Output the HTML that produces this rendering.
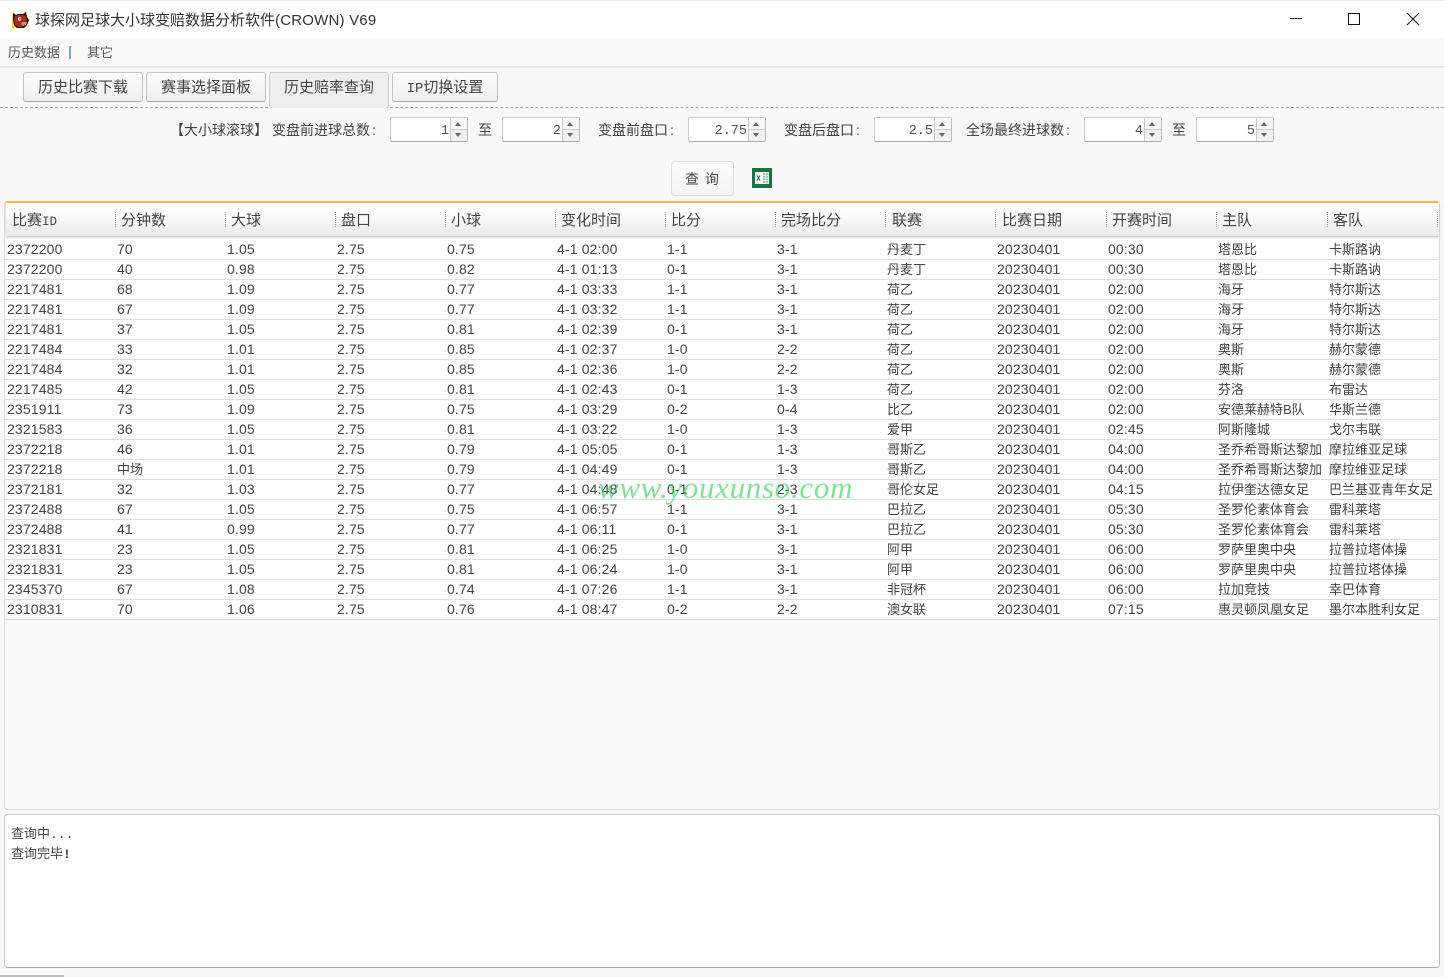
<!DOCTYPE html>
<html><head><meta charset="utf-8"><title>球探网足球大小球变赔数据分析软件</title>
<style>
*{box-sizing:border-box}
html,body{margin:0;padding:0}
body{width:1444px;height:977px;overflow:hidden;position:relative;background:#f8f8f8;font-family:"Liberation Sans","Noto Sans CJK SC",sans-serif;color:#333}
.a{position:absolute;white-space:nowrap}
.l{font-size:13px;line-height:20px;color:#444}
.f{font-size:14px}
.l em{font-style:normal;margin-left:2px}
.tab{position:absolute;top:72px;height:30px;border:1px solid #c4c4c4;border-bottom-color:#aaa;border-radius:3px;background:linear-gradient(#fcfcfc,#eee);font-size:15px;line-height:29px;text-align:center;color:#444}
.spin{position:absolute;top:117px;width:78px;height:25px;background:#fff;border:1px solid #ccc;border-bottom-color:#aaa;border-right-color:#bbb;border-radius:2px;font-family:"Liberation Mono","Noto Sans CJK SC",monospace;font-size:13.5px;line-height:25px;color:#555}
.spin b{position:absolute;right:18px;top:1px;font-weight:normal}
.spin i{position:absolute;right:0;top:0;width:17px;height:23px;border-left:1px solid #ccc;background:linear-gradient(#f8f8f8 0,#f8f8f8 11px,#ccc 11px,#ccc 12px,#f0f0f0 12px)}
.spin i:before{content:"";position:absolute;left:4px;top:4px;border:3px solid transparent;border-top:0;border-bottom:4px solid #666}
.spin i:after{content:"";position:absolute;left:4px;top:15px;border:3px solid transparent;border-bottom:0;border-top:4px solid #666}
#hd{position:absolute;left:6px;top:203px;width:1433px;height:33px;background:linear-gradient(#fff,#fafafa 40%,#e9e9e9);box-shadow:0 1px 2px #bbb}
#hd span{position:absolute;top:7px;font-size:15px;line-height:22px;color:#444}
#hd s{position:absolute;top:9px;height:15px;border-left:1px dotted #aaa}
table{position:absolute;left:5px;top:239px;width:1433px;border-collapse:collapse;table-layout:fixed;background:#fff;font-size:14px;color:#444}
td{height:20px;padding:0 0 0 2px;border-bottom:1.5px solid #ddd;white-space:nowrap;line-height:19px;overflow:visible;letter-spacing:.15px}
tr:first-child td{padding-top:1px;line-height:18px}
td.c{font-size:13px;letter-spacing:0}
tr:first-child td.c{padding-top:2px;line-height:17px}
</style></head><body>
<div class="a" style="left:0;top:0;width:1444px;height:38px;background:#fff;border-top:1px solid #eee"></div>
<svg class="a" style="left:12px;top:11px" width="17" height="17" viewBox="0 0 17 17"><rect width="17" height="17" fill="#fff"/><path d="M0 2h2l2 2 2-1h5l3-3 1 6 2 3-2 6-3 2H0z" fill="#f4e000"/><path d="M1 2l3 2 2-1h5l3-2 1 5 2 3-2 5-3 3H5l-3-3-1-5z" fill="#2a0a06"/><path d="M3 5l3-1h5l3 1 1 4-2 5-3 2H6l-3-3-1-4z" fill="#a82a1c"/><circle cx="7.5" cy="8" r="1.7" fill="#fff"/><circle cx="8" cy="8" r=".7" fill="#222"/><path d="M10 11h5l-1 3-3 1-2-2z" fill="#d88a70"/></svg>
<div class="a" style="left:35px;top:10px;font-size:15px;line-height:21px;color:#333">球探网足球大小球变赔数据分析软件<span style="letter-spacing:.2px">(CROWN) V69</span></div>
<svg class="a" style="left:1285px;top:8px" width="145" height="24" fill="none" stroke="#111" stroke-width="1"><path d="M5 10.5h12"/><rect x="63.5" y="5.5" width="11" height="11"/><path d="M122 5l12 12M134 5l-12 12"/></svg>

<div class="a" style="left:0;top:38px;width:1444px;height:28px;background:#f9f9f9"></div>
<div class="a l" style="left:8px;top:43px;color:#555">历史数据</div>
<div class="a" style="left:69px;top:46px;width:2px;height:13px;background:#7fa8cc"></div>
<div class="a l" style="left:87px;top:43px;color:#555">其它</div>
<div class="a" style="left:0;top:66px;width:1444px;height:2px;background:#e3e7ec"></div>

<div class="tab" style="left:23px;width:120px">历史比赛下载</div>
<div class="tab" style="left:146px;width:120px">赛事选择面板</div>
<div class="a" style="left:0;top:107px;width:1444px;border-top:1px dashed #aaa"></div>
<div class="tab" style="left:269px;width:120px;height:36px;background:#eee;border-bottom:0;z-index:2;border-color:#ccc">历史赔率查询</div>
<div class="tab" style="left:392px;width:106px"><span style="font-family:'Liberation Mono',monospace;font-size:14px">IP</span>切换设置</div>

<div class="a l f" style="left:170px;top:120px">【大小球滚球】</div>
<div class="a l f" style="left:272px;top:120px">变盘前进球总数<em>:</em></div>
<div class="spin" style="left:390px"><b>1</b><i></i></div>
<div class="a l f" style="left:478px;top:120px">至</div>
<div class="spin" style="left:502px"><b>2</b><i></i></div>
<div class="a l f" style="left:598px;top:120px">变盘前盘口<em>:</em></div>
<div class="spin" style="left:688px"><b>2.75</b><i></i></div>
<div class="a l f" style="left:784px;top:120px">变盘后盘口<em>:</em></div>
<div class="spin" style="left:874px"><b>2.5</b><i></i></div>
<div class="a l f" style="left:966px;top:120px">全场最终进球数<em>:</em></div>
<div class="spin" style="left:1084px"><b>4</b><i></i></div>
<div class="a l f" style="left:1172px;top:120px">至</div>
<div class="spin" style="left:1196px"><b>5</b><i></i></div>

<div class="a" style="left:671px;top:161px;width:63px;height:35px;border:1px solid #ddd;border-radius:4px;background:linear-gradient(#fcfcfc,#f4f4f4);font-size:14px;line-height:34px;text-align:center;color:#444;letter-spacing:1px">查 询</div>
<svg class="a" style="left:752px;top:168px" width="20" height="20" viewBox="0 0 20 20"><rect width="20" height="20" fill="#1e7145"/><path d="M3 4h14v12H3z" fill="#eef5f0"/><path d="M11 5h5v10h-5z" fill="#9cc4ac"/><path d="M11 7.5h5M11 10h5M11 12.5h5M13.5 5v10" stroke="#eef5f0" stroke-width=".7"/><path d="M5 7.5l3 5M8 7.5l-3 5" stroke="#1e7145" stroke-width="1.1"/></svg>

<div class="a" style="left:4px;top:201px;width:1436px;height:609px;background:#f9f9f9;border:1px solid #ddd;border-top:2px solid #fbb64f;border-radius:4px"></div>
<div id="hd">
<span style="left:6px">比赛<span style="position:static;font-family:'Liberation Mono',monospace;font-size:12.5px;color:#545">ID</span></span>
<s style="left:109px"></s><span style="left:115px">分钟数</span>
<s style="left:219px"></s><span style="left:225px">大球</span>
<s style="left:329px"></s><span style="left:335px">盘口</span>
<s style="left:439px"></s><span style="left:445px">小球</span>
<s style="left:549px"></s><span style="left:555px">变化时间</span>
<s style="left:659px"></s><span style="left:665px">比分</span>
<s style="left:769px"></s><span style="left:775px">完场比分</span>
<s style="left:879px"></s><span style="left:886px">联赛</span>
<s style="left:989px"></s><span style="left:996px">比赛日期</span>
<s style="left:1100px"></s><span style="left:1106px">开赛时间</span>
<s style="left:1210px"></s><span style="left:1216px">主队</span>
<s style="left:1321px"></s><span style="left:1327px">客队</span>
<s style="left:1431px"></s>
</div>
<table>
<colgroup><col style="width:110px"><col style="width:110px"><col style="width:110px"><col style="width:110px"><col style="width:110px"><col style="width:110px"><col style="width:110px"><col style="width:110px"><col style="width:110px"><col style="width:111px"><col style="width:110px"><col style="width:111px"><col></colgroup>
<tr><td>2372200</td><td>70</td><td>1.05</td><td>2.75</td><td>0.75</td><td>4-1 02:00</td><td>1-1</td><td>3-1</td><td class="c">丹麦丁</td><td>20230401</td><td>00:30</td><td class="c">塔恩比</td><td class="c">卡斯路讷</td></tr>
<tr><td>2372200</td><td>40</td><td>0.98</td><td>2.75</td><td>0.82</td><td>4-1 01:13</td><td>0-1</td><td>3-1</td><td class="c">丹麦丁</td><td>20230401</td><td>00:30</td><td class="c">塔恩比</td><td class="c">卡斯路讷</td></tr>
<tr><td>2217481</td><td>68</td><td>1.09</td><td>2.75</td><td>0.77</td><td>4-1 03:33</td><td>1-1</td><td>3-1</td><td class="c">荷乙</td><td>20230401</td><td>02:00</td><td class="c">海牙</td><td class="c">特尔斯达</td></tr>
<tr><td>2217481</td><td>67</td><td>1.09</td><td>2.75</td><td>0.77</td><td>4-1 03:32</td><td>1-1</td><td>3-1</td><td class="c">荷乙</td><td>20230401</td><td>02:00</td><td class="c">海牙</td><td class="c">特尔斯达</td></tr>
<tr><td>2217481</td><td>37</td><td>1.05</td><td>2.75</td><td>0.81</td><td>4-1 02:39</td><td>0-1</td><td>3-1</td><td class="c">荷乙</td><td>20230401</td><td>02:00</td><td class="c">海牙</td><td class="c">特尔斯达</td></tr>
<tr><td>2217484</td><td>33</td><td>1.01</td><td>2.75</td><td>0.85</td><td>4-1 02:37</td><td>1-0</td><td>2-2</td><td class="c">荷乙</td><td>20230401</td><td>02:00</td><td class="c">奥斯</td><td class="c">赫尔蒙德</td></tr>
<tr><td>2217484</td><td>32</td><td>1.01</td><td>2.75</td><td>0.85</td><td>4-1 02:36</td><td>1-0</td><td>2-2</td><td class="c">荷乙</td><td>20230401</td><td>02:00</td><td class="c">奥斯</td><td class="c">赫尔蒙德</td></tr>
<tr><td>2217485</td><td>42</td><td>1.05</td><td>2.75</td><td>0.81</td><td>4-1 02:43</td><td>0-1</td><td>1-3</td><td class="c">荷乙</td><td>20230401</td><td>02:00</td><td class="c">芬洛</td><td class="c">布雷达</td></tr>
<tr><td>2351911</td><td>73</td><td>1.09</td><td>2.75</td><td>0.75</td><td>4-1 03:29</td><td>0-2</td><td>0-4</td><td class="c">比乙</td><td>20230401</td><td>02:00</td><td class="c">安德莱赫特B队</td><td class="c">华斯兰德</td></tr>
<tr><td>2321583</td><td>36</td><td>1.05</td><td>2.75</td><td>0.81</td><td>4-1 03:22</td><td>1-0</td><td>1-3</td><td class="c">爱甲</td><td>20230401</td><td>02:45</td><td class="c">阿斯隆城</td><td class="c">戈尔韦联</td></tr>
<tr><td>2372218</td><td>46</td><td>1.01</td><td>2.75</td><td>0.79</td><td>4-1 05:05</td><td>0-1</td><td>1-3</td><td class="c">哥斯乙</td><td>20230401</td><td>04:00</td><td class="c">圣乔希哥斯达黎加</td><td class="c">摩拉维亚足球</td></tr>
<tr><td>2372218</td><td class="c">中场</td><td>1.01</td><td>2.75</td><td>0.79</td><td>4-1 04:49</td><td>0-1</td><td>1-3</td><td class="c">哥斯乙</td><td>20230401</td><td>04:00</td><td class="c">圣乔希哥斯达黎加</td><td class="c">摩拉维亚足球</td></tr>
<tr><td>2372181</td><td>32</td><td>1.03</td><td>2.75</td><td>0.77</td><td>4-1 04:48</td><td>0-1</td><td>2-3</td><td class="c">哥伦女足</td><td>20230401</td><td>04:15</td><td class="c">拉伊奎达德女足</td><td class="c">巴兰基亚青年女足</td></tr>
<tr><td>2372488</td><td>67</td><td>1.05</td><td>2.75</td><td>0.75</td><td>4-1 06:57</td><td>1-1</td><td>3-1</td><td class="c">巴拉乙</td><td>20230401</td><td>05:30</td><td class="c">圣罗伦素体育会</td><td class="c">雷科莱塔</td></tr>
<tr><td>2372488</td><td>41</td><td>0.99</td><td>2.75</td><td>0.77</td><td>4-1 06:11</td><td>0-1</td><td>3-1</td><td class="c">巴拉乙</td><td>20230401</td><td>05:30</td><td class="c">圣罗伦素体育会</td><td class="c">雷科莱塔</td></tr>
<tr><td>2321831</td><td>23</td><td>1.05</td><td>2.75</td><td>0.81</td><td>4-1 06:25</td><td>1-0</td><td>3-1</td><td class="c">阿甲</td><td>20230401</td><td>06:00</td><td class="c">罗萨里奥中央</td><td class="c">拉普拉塔体操</td></tr>
<tr><td>2321831</td><td>23</td><td>1.05</td><td>2.75</td><td>0.81</td><td>4-1 06:24</td><td>1-0</td><td>3-1</td><td class="c">阿甲</td><td>20230401</td><td>06:00</td><td class="c">罗萨里奥中央</td><td class="c">拉普拉塔体操</td></tr>
<tr><td>2345370</td><td>67</td><td>1.08</td><td>2.75</td><td>0.74</td><td>4-1 07:26</td><td>1-1</td><td>3-1</td><td class="c">非冠杯</td><td>20230401</td><td>06:00</td><td class="c">拉加竞技</td><td class="c">幸巴体育</td></tr>
<tr><td>2310831</td><td>70</td><td>1.06</td><td>2.75</td><td>0.76</td><td>4-1 08:47</td><td>0-2</td><td>2-2</td><td class="c">澳女联</td><td>20230401</td><td>07:15</td><td class="c">惠灵顿凤凰女足</td><td class="c">墨尔本胜利女足</td></tr>
</table>
<div class="a" style="left:598px;top:470px;font-family:'Liberation Serif',serif;font-style:italic;font-size:31px;line-height:36px;color:rgba(40,205,80,.6);letter-spacing:.7px">www.youxunso.com</div>

<div class="a" style="left:4px;top:814px;width:1436px;height:154px;background:#fff;border:1px solid #ccc;border-bottom:1px solid #aaa;border-right-color:#bbb;border-radius:4px"></div>
<div class="a" style="left:11px;top:824px;font-size:13px;line-height:20px;height:20px;color:#444">查询中<span style="font-family:'Liberation Mono',monospace">...</span></div>
<div class="a" style="left:11px;top:844px;font-size:13px;line-height:20px;height:20px;color:#444">查询完毕<span style="font-family:'Liberation Mono',monospace;font-weight:bold">!</span></div>
<div class="a" style="left:0;top:975px;width:64px;height:2px;background:#bbb"></div>
</body></html>
